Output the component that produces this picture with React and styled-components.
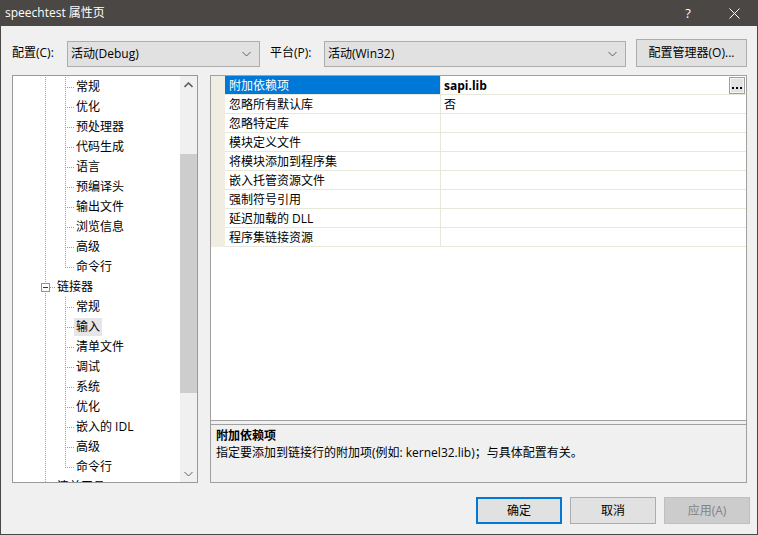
import React from 'react';
import styled, { createGlobalStyle, css } from 'styled-components';

const FONT = `"Open Sans", "Noto Sans CJK SC", sans-serif`;
const LINE = '#e6e9da';
const DOT = '#a0a0a0';

const Global = createGlobalStyle`
  html, body { margin: 0; padding: 0; background: #f0f0f0; }
  * { box-sizing: border-box; }
  body { font-family: ${FONT}; font-size: 12px; color: #000; }
`;

const Window = styled.div`
  width: 758px;
  height: 535px;
  display: flex;
  flex-direction: column;
  background: #f0f0f0;
  border: 1px solid #4a4744;
  border-top: none;
  overflow: hidden;
`;

const TitleBar = styled.div`
  height: 26px;
  flex-shrink: 0;
  display: flex;
  align-items: center;
  background: #4a4744;
  color: #fff;
  padding-left: 4px;
`;

const Title = styled.div`
  flex: 1;
  font-size: 12px;
  line-height: 26px;
`;

const TitleButton = styled.div`
  width: 46px;
  height: 26px;
  display: flex;
  align-items: center;
  justify-content: center;
  font-size: 13px;
  color: #fff;
`;

const ConfigRow = styled.div`
  margin-top: 13px;
  height: 28px;
  flex-shrink: 0;
  display: flex;
  align-items: center;
  padding-left: 11px;
`;

const FieldLabel = styled.div`
  width: ${p => p.$w}px;
  line-height: 16px;
  flex-shrink: 0;
`;

const Select = styled.div`
  width: ${p => p.$w}px;
  height: 26px;
  align-self: flex-end;
  display: flex;
  align-items: center;
  background: #e1e1e1;
  border: 1px solid #adadad;
  padding: 0 8px 0 3px;
  flex-shrink: 0;
`;

const SelectText = styled.span`
  flex: 1;
  line-height: 16px;
`;

const PushButton = styled.div`
  width: ${p => p.$w || 86}px;
  height: ${p => p.$h || 27}px;
  display: flex;
  align-items: center;
  justify-content: center;
  background: #e1e1e1;
  border: 1px solid #adadad;
  line-height: 16px;
  flex-shrink: 0;
  ${p => p.$primary && css`
    border: 2px solid #0078d7;
  `}
  ${p => p.$disabled && css`
    background: #cccccc;
    border-color: #bfbfbf;
    color: #838383;
  `}
`;

const Gap = styled.div`
  width: ${p => p.$w}px;
  flex-shrink: 0;
`;

const Main = styled.div`
  margin-top: 8px;
  height: 408px;
  flex-shrink: 0;
  display: flex;
  gap: 12px;
  padding-left: 11px;
`;

const TreePanel = styled.div`
  width: 186px;
  height: 100%;
  display: flex;
  background: #fff;
  border: 1px solid #999;
`;

const TreeList = styled.div`
  flex: 1;
  overflow: hidden;
  padding-top: 1px;
`;

const TreeRow = styled.div`
  height: 20px;
  display: flex;
  align-items: center;
  padding-left: 22px;
`;

const Guide = styled.span`
  position: relative;
  width: 20px;
  height: 20px;
  flex-shrink: 0;
  &::before {
    content: '';
    display: ${p => (p.$v === 'none' ? 'none' : 'block')};
    position: absolute;
    left: 10px;
    top: 0;
    width: 1px;
    height: ${p => (p.$v === 'top' ? '11px' : '20px')};
    background-image: linear-gradient(to bottom, ${DOT} 50%, transparent 50%);
    background-size: 1px 2px;
  }
  &::after {
    content: '';
    display: ${p => (p.$h ? 'block' : 'none')};
    position: absolute;
    left: ${p => (p.$box ? 15 : 10)}px;
    top: 10px;
    width: ${p => (p.$box ? 5 : 9)}px;
    height: 1px;
    background-image: linear-gradient(to right, ${DOT} 50%, transparent 50%);
    background-size: 2px 1px;
  }
`;

const ExpandBox = styled.span`
  position: absolute;
  left: 6px;
  top: 6px;
  width: 9px;
  height: 9px;
  border: 1px solid #919191;
  background: #fff;
  z-index: 1;
  &::before {
    content: '';
    position: absolute;
    left: 1px;
    top: 3px;
    width: 5px;
    height: 1px;
    background: #333;
  }
  &::after {
    content: '';
    display: ${p => (p.$plus ? 'block' : 'none')};
    position: absolute;
    left: 3px;
    top: 1px;
    width: 1px;
    height: 5px;
    background: #333;
  }
`;

const NodeLabel = styled.span`
  height: 18px;
  line-height: 18px;
  padding: 0 2px;
  margin-left: ${p => p.$ml || 0}px;
  white-space: nowrap;
  background: ${p => (p.$selected ? '#e6e6e6' : 'transparent')};
`;

const Scrollbar = styled.div`
  width: 17px;
  height: 100%;
  display: flex;
  flex-direction: column;
  background: #f0f0f0;
  flex-shrink: 0;
`;

const ScrollArrow = styled.div`
  height: 17px;
  display: flex;
  align-items: center;
  justify-content: center;
  flex-shrink: 0;
`;

const ScrollTrack = styled.div`
  flex: 1;
`;

const ScrollThumb = styled.div`
  margin-top: 61px;
  height: 239px;
  background: #cdcdcd;
`;

const GridPanel = styled.div`
  width: 537px;
  height: 100%;
  display: flex;
  flex-direction: column;
  border: 1px solid #a0a0a0;
`;

const GridArea = styled.div`
  height: 345px;
  flex-shrink: 0;
  background: #fff;
  border-bottom: 1px solid #a0a0a0;
`;

const PropRow = styled.div`
  height: 19px;
  display: flex;
`;

const RowMargin = styled.div`
  width: 14px;
  flex-shrink: 0;
  background: #f0eee2;
`;

const PropName = styled.div`
  width: 215px;
  flex-shrink: 0;
  border-bottom: 1px solid ${LINE};
  padding-left: 4px;
  line-height: 20px;
  white-space: nowrap;
  ${p => p.$selected && css`
    background: #0078d7;
    color: #fff;
  `}
`;

const PropValue = styled.div`
  flex: 1;
  display: flex;
  align-items: flex-start;
  border-bottom: 1px solid ${LINE};
  border-left: 1px solid ${LINE};
  padding-left: 3px;
  line-height: 20px;
  font-weight: ${p => (p.$bold ? 700 : 400)};
`;

const EllipsisButton = styled.div`
  margin: 1px 1px 0 auto;
  width: 16px;
  height: 17px;
  border: 1px solid #a0a0a0;
  background: #e3e3e3;
  box-shadow: inset 0 0 0 1px #f4f4f4;
  display: flex;
  align-items: flex-end;
  justify-content: center;
  gap: 2px;
  padding-bottom: 4px;
`;

const Dot = styled.span`
  width: 2px;
  height: 2px;
  background: #000;
`;

const Desc = styled.div`
  margin-top: 3px;
  flex: 1;
  border-top: 1px solid #a0a0a0;
  padding: 3px 5px;
  background: #f0f0f0;
`;

const DescTitle = styled.div`
  font-weight: 700;
  line-height: 16px;
`;

const DescText = styled.div`
  line-height: 17px;
`;

const Footer = styled.div`
  margin-top: 14px;
  display: flex;
  justify-content: flex-end;
  gap: 8px;
  padding-right: 7px;
`;

const Chevron = ({ up }) => (
  <svg width="9" height="6" viewBox="0 0 9 6">
    <polyline
      points={up ? '0.5,5 4.5,1 8.5,5' : '0.5,1 4.5,5 8.5,1'}
      fill="none"
      stroke="#606060"
      strokeWidth={up ? 1.6 : 1}
    />
  </svg>
);

const CloseIcon = () => (
  <svg width="11" height="11" viewBox="0 0 11 11">
    <path d="M0.5 0.5 L10.5 10.5 M10.5 0.5 L0.5 10.5" stroke="#fff" strokeWidth="1" />
  </svg>
);

const tree = [
  ...['常规', '优化', '预处理器', '代码生成', '语言', '预编译头', '输出文件', '浏览信息', '高级', '命令行'].map((t, i, a) => ({
    text: t, level: 3, last: i === a.length - 1,
  })),
  { text: '链接器', level: 2, box: 'minus' },
  ...['常规', '输入', '清单文件', '调试', '系统', '优化', '嵌入的 IDL', '高级', '命令行'].map((t, i, a) => ({
    text: t, level: 3, last: i === a.length - 1, selected: t === '输入',
  })),
  { text: '清单工具', level: 2, box: 'plus' },
];

const props = [
  { name: '附加依赖项', value: 'sapi.lib', selected: true },
  { name: '忽略所有默认库', value: '否' },
  { name: '忽略特定库', value: '' },
  { name: '模块定义文件', value: '' },
  { name: '将模块添加到程序集', value: '' },
  { name: '嵌入托管资源文件', value: '' },
  { name: '强制符号引用', value: '' },
  { name: '延迟加载的 DLL', value: '' },
  { name: '程序集链接资源', value: '' },
];

function TreeNode({ node }) {
  if (node.level === 2) {
    return (
      <TreeRow>
        <Guide $v="full" $h $box>
          <ExpandBox $plus={node.box === 'plus'} />
        </Guide>
        <NodeLabel>{node.text}</NodeLabel>
      </TreeRow>
    );
  }
  return (
    <TreeRow>
      <Guide $v="full" />
      <Guide $v={node.last ? 'top' : 'full'} $h />
      <NodeLabel $ml={-1} $selected={node.selected}>{node.text}</NodeLabel>
    </TreeRow>
  );
}

export default function App() {
  return (
    <>
      <Global />
      <Window>
        <TitleBar>
          <Title>speechtest 属性页</Title>
          <TitleButton>?</TitleButton>
          <TitleButton><CloseIcon /></TitleButton>
        </TitleBar>

        <ConfigRow>
          <FieldLabel $w={55}>配置(C):</FieldLabel>
          <Select $w={193}>
            <SelectText>活动(Debug)</SelectText>
            <Chevron />
          </Select>
          <Gap $w={10} />
          <FieldLabel $w={54}>平台(P):</FieldLabel>
          <Select $w={302}>
            <SelectText>活动(Win32)</SelectText>
            <Chevron />
          </Select>
          <Gap $w={10} />
          <PushButton $w={111} $h={28}>配置管理器(O)...</PushButton>
        </ConfigRow>

        <Main>
          <TreePanel>
            <TreeList>
              {tree.map((n, i) => <TreeNode key={i} node={n} />)}
            </TreeList>
            <Scrollbar>
              <ScrollArrow><Chevron up /></ScrollArrow>
              <ScrollTrack><ScrollThumb /></ScrollTrack>
              <ScrollArrow><Chevron /></ScrollArrow>
            </Scrollbar>
          </TreePanel>

          <GridPanel>
            <GridArea>
              {props.map((p, i) => (
                <PropRow key={i}>
                  <RowMargin />
                  <PropName $selected={p.selected}>{p.name}</PropName>
                  <PropValue $bold={p.selected}>
                    {p.value}
                    {p.selected && (
                      <EllipsisButton><Dot /><Dot /><Dot /></EllipsisButton>
                    )}
                  </PropValue>
                </PropRow>
              ))}
            </GridArea>
            <Desc>
              <DescTitle>附加依赖项</DescTitle>
              <DescText>指定要添加到链接行的附加项(例如: kernel32.lib)；与具体配置有关。</DescText>
            </Desc>
          </GridPanel>
        </Main>

        <Footer>
          <PushButton $primary>确定</PushButton>
          <PushButton>取消</PushButton>
          <PushButton $disabled>应用(A)</PushButton>
        </Footer>
      </Window>
    </>
  );
}
